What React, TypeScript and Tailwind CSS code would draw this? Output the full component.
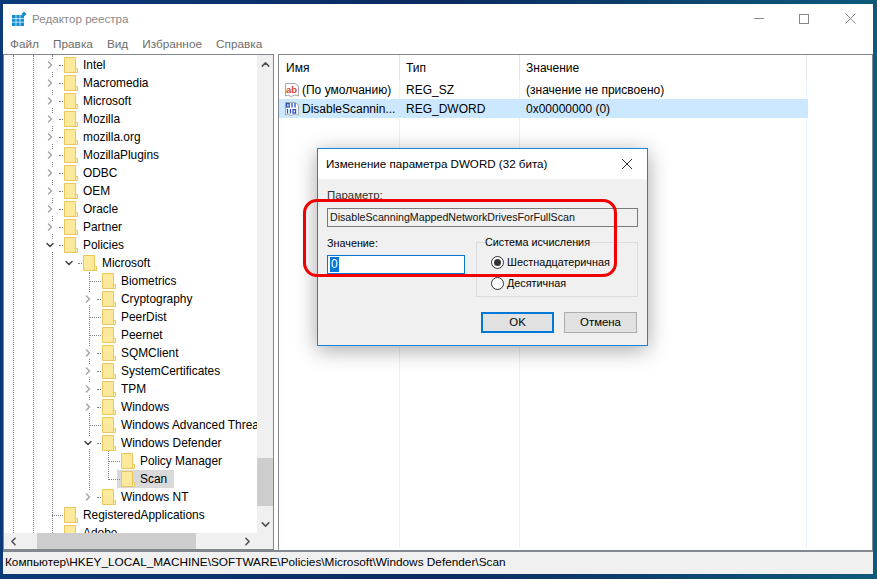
import { ChevronRight, ChevronDown, ChevronUp, ChevronLeft } from 'lucide-react';

const FONT = "font-['Liberation_Sans',Arial,sans-serif]";

type Row = { label: string; level: number; arrow?: 'right' | 'down'; selected?: boolean };

const rows: Row[] = [
  { label: 'Intel', level: 0, arrow: 'right' },
  { label: 'Macromedia', level: 0, arrow: 'right' },
  { label: 'Microsoft', level: 0, arrow: 'right' },
  { label: 'Mozilla', level: 0, arrow: 'right' },
  { label: 'mozilla.org', level: 0, arrow: 'right' },
  { label: 'MozillaPlugins', level: 0, arrow: 'right' },
  { label: 'ODBC', level: 0, arrow: 'right' },
  { label: 'OEM', level: 0, arrow: 'right' },
  { label: 'Oracle', level: 0, arrow: 'right' },
  { label: 'Partner', level: 0, arrow: 'right' },
  { label: 'Policies', level: 0, arrow: 'down' },
  { label: 'Microsoft', level: 1, arrow: 'down' },
  { label: 'Biometrics', level: 2 },
  { label: 'Cryptography', level: 2, arrow: 'right' },
  { label: 'PeerDist', level: 2 },
  { label: 'Peernet', level: 2 },
  { label: 'SQMClient', level: 2, arrow: 'right' },
  { label: 'SystemCertificates', level: 2, arrow: 'right' },
  { label: 'TPM', level: 2, arrow: 'right' },
  { label: 'Windows', level: 2, arrow: 'right' },
  { label: 'Windows Advanced Threat Protection', level: 2 },
  { label: 'Windows Defender', level: 2, arrow: 'down' },
  { label: 'Policy Manager', level: 3 },
  { label: 'Scan', level: 3, selected: true },
  { label: 'Windows NT', level: 2, arrow: 'right' },
  { label: 'RegisteredApplications', level: 0 },
  { label: 'Adobe', level: 0 },
];

function Folder() {
  return (
    <svg width="14" height="16" viewBox="0 0 14 16" className="shrink-0">
      <path d="M0.5 0.5H11.5V15.5H0.5Z" fill="#fde99c" stroke="#eac75c" />
      <path d="M11.5 11.5H13.5V15.5H11.5Z" fill="#fff4c4" stroke="#eac75c" />
    </svg>
  );
}

function TreeRow({ row }: { row: Row }) {
  const left = 41 + row.level * 19;
  return (
    <div className="relative flex h-[18px] items-center" style={{ paddingLeft: left + 19 }}>
      {row.arrow === 'right' && (
        <ChevronRight size={12} strokeWidth={3} className="absolute top-[3px] bg-white text-[#a6a6a6]" style={{ left: left - 1 }} />
      )}
      {row.arrow === 'down' && (
        <ChevronDown size={12} strokeWidth={3} className="absolute top-[3px] bg-white text-[#404040]" style={{ left: left - 1 }} />
      )}
      <div
        className="absolute top-[9px] h-0 border-t border-dotted border-[#808080]"
        style={row.arrow ? { left: left + 14, width: 4 } : { left: left + 7, width: 11 }}
      />
      <div className={`-ml-[4px] flex items-center pl-[4px] ${row.selected ? 'bg-[#d9d9d9]' : ''}`}>
        <Folder />
        <span className={`ml-[5px] whitespace-nowrap text-[11.9px] leading-[18px] text-black ${row.selected ? 'pr-[7px]' : ''}`}>
          {row.label}
        </span>
      </div>
    </div>
  );
}

function RegIcon({ kind }: { kind: 'ab' | 'bin' }) {
  return (
    <svg width="16" height="16" viewBox="0 0 16 16" className="shrink-0">
      <path d="M1.5 1.5H11L14.5 4V14L11 13L7 14.5L4 13L1.5 14Z" fill="#fff" stroke="#a8a8a8" />
      {kind === 'ab' ? (
        <text x="7.5" y="10.5" textAnchor="middle" fontSize="9.5" fontWeight="700" fill="#d9442a" fontFamily="Liberation Sans">
          ab
        </text>
      ) : (
        <g fill="none" stroke="#2c4fc4" strokeWidth="1.3">
          <rect x="2.6" y="2.6" width="2.6" height="3.4" />
          <path d="M8 2v4.6M11 2v4.6M3.5 8v4.6M6.5 8v4.6" />
          <rect x="9" y="8.6" width="2.6" height="3.4" />
        </g>
      )}
    </svg>
  );
}

function TreePanel() {
  return (
    <div className="relative flex w-[271px] shrink-0 flex-col overflow-hidden border border-[#828790] bg-white">
      <div className="flex min-h-0 flex-1">
        <div className="relative min-w-0 flex-1 overflow-hidden">
          {/* dotted guide lines of the tree */}
          <div className="absolute bottom-0 left-[9px] top-0 border-l border-dotted border-[#808080]" />
          <div className="absolute bottom-0 left-[29px] top-0 border-l border-dotted border-[#808080]" />
          <div className="absolute bottom-0 left-[48px] top-0 border-l border-dotted border-[#808080]" />
          <div className="absolute left-[85px] top-[217px] h-[218px] border-l border-dotted border-[#808080]" />
          <div className="absolute left-[104px] top-[395px] h-[30px] border-l border-dotted border-[#808080]" />
          <div className="relative mt-[1px]">
            {rows.map((row, i) => (
              <TreeRow key={i} row={row} />
            ))}
          </div>
        </div>
        <div className="flex w-[16px] shrink-0 flex-col items-center justify-between bg-[#f0f0f0] text-[#505050]">
          <ChevronUp size={13} strokeWidth={2.8} className="mt-[3px]" />
          <div className="flex w-full flex-1 flex-col justify-end pb-[12px] pt-[4px]">
            <div className="h-[48px] w-full bg-[#cdcdcd]" />
          </div>
          <ChevronDown size={13} strokeWidth={2.8} className="mb-[2px]" />
        </div>
      </div>
      <div className="flex h-[16px] shrink-0 items-center bg-[#f0f0f0] text-[#505050]">
        <ChevronLeft size={13} strokeWidth={2.8} className="ml-[3px]" />
        <div className="ml-[17px] h-full w-[159px] bg-[#cdcdcd]" />
        <div className="flex-1" />
        <ChevronRight size={13} strokeWidth={2.8} className="mr-[19px]" />
      </div>
    </div>
  );
}

function ValueRow(props: { kind: 'ab' | 'bin'; name: string; type: string; value: string; selected?: boolean }) {
  return (
    <div className={`relative flex w-[529px] items-center ${props.selected ? 'h-[19px] bg-[#cce8ff]' : 'h-[18px]'}`}>
      <div className="flex w-[121px] items-center gap-[2px] pl-[5px]">
        <RegIcon kind={props.kind} />
        <span className="whitespace-nowrap">{props.name}</span>
      </div>
      <div className="w-[120px] pl-[6px]">{props.type}</div>
      <div className="pl-[6px]">{props.value}</div>
    </div>
  );
}

function ValuesPanel() {
  return (
    <div className="flex min-w-0 flex-1 flex-col border border-b-0 border-[#828790] bg-white text-[12px] text-black">
      <div className="flex h-[26px] shrink-0 text-[12px]">
        <div className="w-[121px] border-r border-[#e5e5e5] pl-[7px] pt-[4px]">Имя</div>
        <div className="w-[120px] border-r border-[#e5e5e5] pl-[6px] pt-[4px]">Тип</div>
        <div className="w-[287px] border-r border-[#e5e5e5] pl-[6px] pt-[4px]">Значение</div>
      </div>
      <div className="relative flex-1">
        <div className="absolute bottom-[2px] left-[120px] top-0 border-r border-[#eaf3fb]" />
        <div className="absolute bottom-[2px] left-[240px] top-0 border-r border-[#eaf3fb]" />
        <div className="absolute bottom-[2px] left-[527px] top-0 border-r border-[#eaf3fb]" />
        <ValueRow kind="ab" name="(По умолчанию)" type="REG_SZ" value="(значение не присвоено)" />
        <ValueRow kind="bin" name="DisableScannin..." type="REG_DWORD" value="0x00000000 (0)" selected />
      </div>
    </div>
  );
}

function DwordDialog() {
  return (
    <div className="absolute left-[317px] top-[148px] w-[331px] border border-[#1883d7] bg-[#f0f0f0] text-[10.8px] text-black shadow-[0_4px_20px_rgba(0,0,0,0.35)]">
      <div className="flex h-[30px] items-center justify-between bg-white pl-[8px] pr-[14px]">
        <span className="text-[11.6px]">Изменение параметра DWORD (32 бита)</span>
        <svg width="12" height="12" viewBox="0 0 12 12" stroke="#333" strokeWidth="1">
          <path d="M1 1L11 11M11 1L1 11" />
        </svg>
      </div>
      <div className="px-[9px] pb-[12px] pt-[9px]">
        <div className="h-[15px] text-[11.4px] leading-[15px] text-[#333]">Параметр:</div>
        <div className="mt-[5px] flex h-[19px] items-center whitespace-nowrap border border-[#7a7a7a] bg-[#f0f0f0] pl-[2px] text-[10.65px] text-[#111]">
          DisableScanningMappedNetworkDrivesForFullScan
        </div>
        <div className="mt-[7px] flex justify-between">
          <div className="w-[138px] pt-[2px]">
            <div className="h-[15px] leading-[15px]">Значение:</div>
            <div className="mt-[4px] flex h-[19px] items-center border border-[#0078d7] bg-white pl-[2px] text-[12px]">
              <span className="bg-[#0078d7] px-[1px] leading-[15px] text-white">0</span>
            </div>
          </div>
          <div className="relative mt-[8px] h-[55px] w-[162px] border border-[#dcdcdc] pl-[14px] pt-[10px]">
            <div className="absolute -top-[8px] left-[8px] bg-[#f0f0f0] leading-[15px]">Система исчисления</div>
            <label className="flex h-[18px] items-center gap-[3px]">
              <span className="flex h-[13px] w-[13px] items-center justify-center rounded-full border border-[#333] bg-white">
                <span className="h-[7px] w-[7px] rounded-full bg-[#333]" />
              </span>
              Шестнадцатеричная
            </label>
            <label className="mt-[3px] flex h-[18px] items-center gap-[3px]">
              <span className="h-[13px] w-[13px] rounded-full border border-[#333] bg-white" />
              Десятичная
            </label>
          </div>
        </div>
        <div className="mt-[15px] flex justify-end gap-[10px] pr-[1px]">
          <button className="h-[21px] w-[73px] border-2 border-[#0078d7] bg-[#e1e1e1] text-[11.4px]">OK</button>
          <button className="h-[21px] w-[73px] border border-[#adadad] bg-[#e1e1e1] text-[11.4px]">Отмена</button>
        </div>
      </div>
    </div>
  );
}

export default function App() {
  return (
    <div className={`relative h-[579px] w-[877px] overflow-hidden bg-[linear-gradient(90deg,#0b3a78_0%,#0b2a60_50%,#0e5a7a_100%)] ${FONT}`}>
      <div className="absolute bottom-[5px] left-[3px] right-[4px] top-[4px] flex flex-col bg-white">
        <div className="flex h-[31px] shrink-0 items-center pb-[2px] pl-[8px]">
          <svg width="16" height="16" viewBox="0 0 16 16" className="shrink-0">
            <path d="M1 4H13V15H1Z" fill="#0f8fd6" />
            <path d="M5 4V15M9 4V15M1 7.6H13M1 11.2H13" stroke="#fff" strokeWidth="0.7" />
            <path d="M13 0.5L15.5 3L13 5.5L10.5 3Z" fill="#1e88c7" />
          </svg>
          <span className="ml-[5px] text-[11.6px] text-[#8a8a8a]">Редактор реестра</span>
          <div className="ml-auto flex items-center">
            <div className="mr-[35px] h-px w-[10px] bg-[#8a8a8a]" />
            <div className="mr-[36px] h-[10px] w-[10px] border border-[#8a8a8a]" />
            <svg width="11" height="11" viewBox="0 0 11 11" stroke="#8a8a8a" className="mr-[17px]">
              <path d="M0.5 0.5L10.5 10.5M10.5 0.5L0.5 10.5" />
            </svg>
          </div>
        </div>
        <div className="flex h-[19px] shrink-0 items-center gap-[14px] pl-[7px] text-[11.8px] text-[#6d6d6d]">
          <span>Файл</span>
          <span>Правка</span>
          <span>Вид</span>
          <span>Избранное</span>
          <span>Справка</span>
        </div>
        <div className="flex min-h-0 flex-1 gap-[4px]">
          <TreePanel />
          <ValuesPanel />
        </div>
        <div className="relative flex h-[24px] shrink-0 items-center border-t-2 border-[#828790] bg-[#f0f0f0] pl-[2px] text-[11.8px] text-black">
          Компьютер\HKEY_LOCAL_MACHINE\SOFTWARE\Policies\Microsoft\Windows Defender\Scan
        </div>
      </div>
      <DwordDialog />
      {/* red marker drawn over the screenshot */}
      <div className="absolute left-[303px] top-[199px] h-[78px] w-[314px] rounded-[14px] border-[3px] border-[#f00000]" />
    </div>
  );
}
